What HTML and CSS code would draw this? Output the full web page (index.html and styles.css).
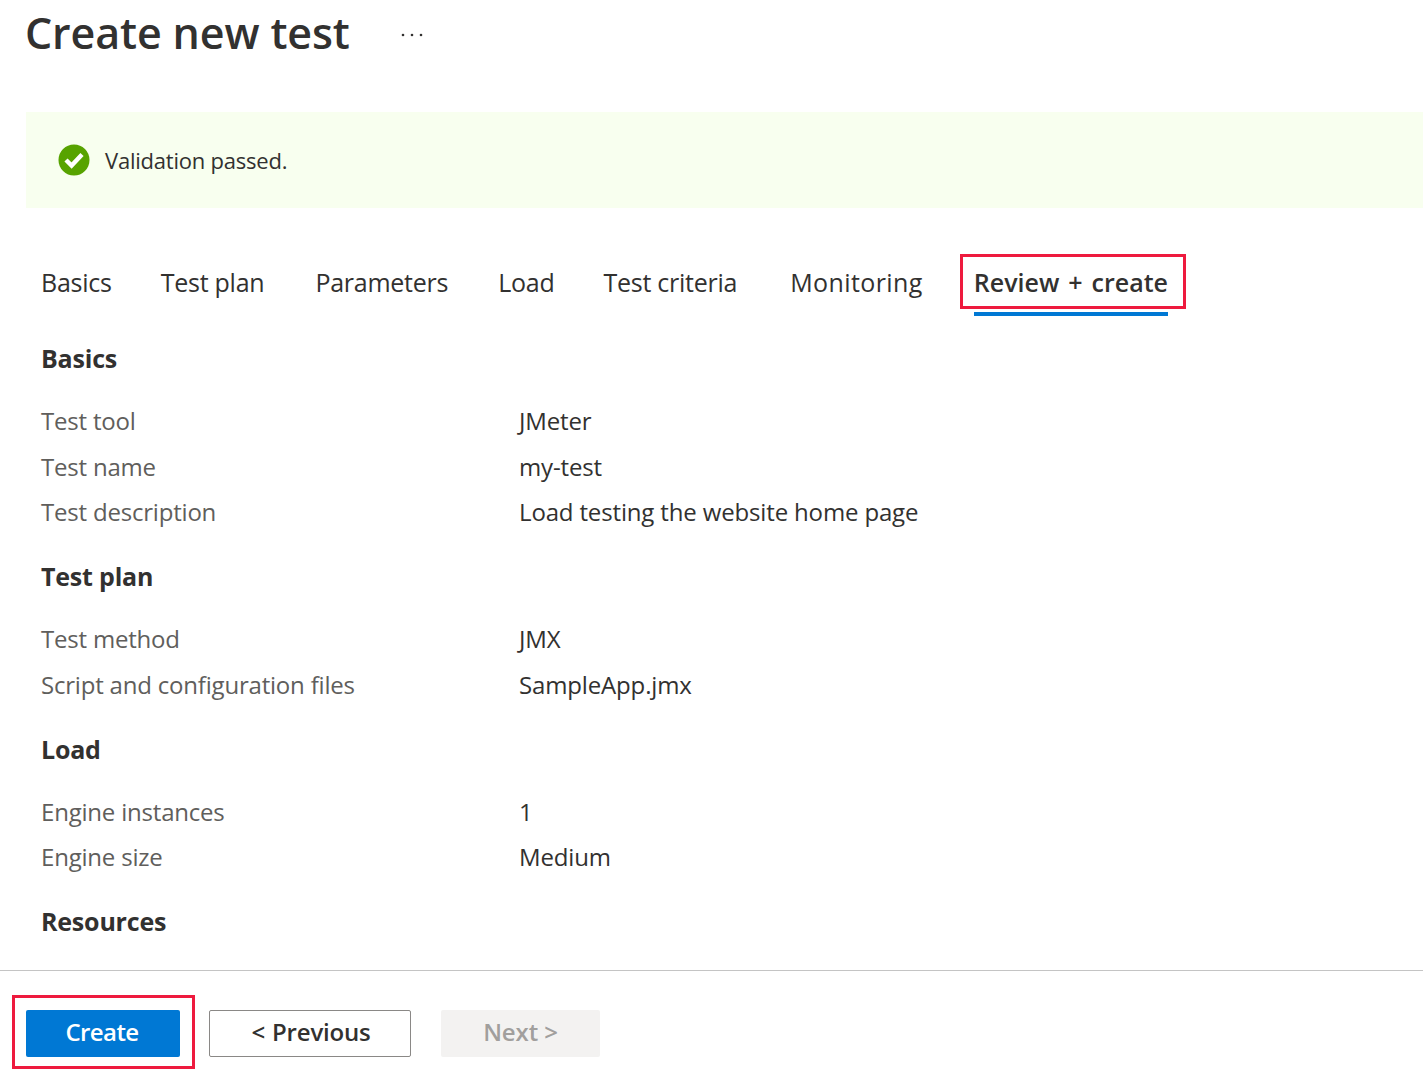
FILE: index.html
```html
<!DOCTYPE html>
<html lang="en">

<head>
    <meta charset="UTF-8">
    <meta name="viewport" content="width=device-width, initial-scale=1.0">
    <title>Create new test</title>
    <link rel="stylesheet" href="styles.css">
</head>

<body>
    <div class="page-head">
        <h1>Create new test</h1>
        <span class="more">
            <svg width="22" height="4" viewBox="0 0 22 4"><circle cx="2" cy="2" r="1.3"/><circle cx="11" cy="2" r="1.3"/><circle cx="20" cy="2" r="1.3"/></svg>
        </span>
    </div>

    <div class="banner">
        <svg class="check" width="32" height="32" viewBox="0 0 32 32">
            <circle cx="16" cy="16" r="15.5" fill="#57a300"/>
            <path d="M8 16l5.6 5.6 10.4-11" fill="none" stroke="#fff" stroke-width="4.4"/>
        </svg>
        <span>Validation passed.</span>
    </div>

    <div class="tabs">
        <span class="tab tab-basics">Basics</span>
        <span class="tab tab-plan">Test plan</span>
        <span class="tab tab-params">Parameters</span>
        <span class="tab tab-load">Load</span>
        <span class="tab tab-criteria">Test criteria</span>
        <span class="tab tab-monitoring">Monitoring</span>
        <span class="tab tab-active">Review + create</span>
    </div>

    <div class="review">
        <h2>Basics</h2>
        <dl>
            <dt>Test tool</dt><dd>JMeter</dd>
            <dt>Test name</dt><dd>my-test</dd>
            <dt>Test description</dt><dd>Load testing the website home page</dd>
        </dl>

        <h2>Test plan</h2>
        <dl>
            <dt>Test method</dt><dd>JMX</dd>
            <dt>Script and configuration files</dt><dd>SampleApp.jmx</dd>
        </dl>

        <h2>Load</h2>
        <dl>
            <dt>Engine instances</dt><dd>1</dd>
            <dt>Engine size</dt><dd>Medium</dd>
        </dl>

        <h2>Resources</h2>
    </div>

    <div class="footer">
        <button type="button" class="btn btn-primary">Create</button>
        <button type="button" class="btn btn-prev">&lt; Previous</button>
        <button type="button" class="btn btn-next">Next &gt;</button>
    </div>
</body>

</html>
```

FILE: styles.css
```css
body {
    margin: 0;
    height: 1084px;
    overflow: hidden;
    background: #fff;
    color: #323130;
    font-family: "Open Sans", "Noto Sans", sans-serif;
    font-size: 24px;
}

.page-head {
    display: flex;
    align-items: center;
    height: 66px;
    padding-left: 25px;
}

h1 {
    margin: 0;
    font-size: 43px;
    font-weight: 600;
    line-height: 66px;
    letter-spacing: -0.13px;
}

.more {
    display: flex;
    margin: 4px 0 0 51px;
    fill: #323130;
}

.banner {
    display: flex;
    align-items: center;
    gap: 15px;
    height: 96px;
    margin: 46px 0 0 26px;
    padding-left: 32px;
    background: #f8ffef;
    font-size: 22px;
    letter-spacing: -0.22px;
}

.tabs {
    display: flex;
    height: 64px;
    margin-top: 43px;
    padding-left: 41px;
    line-height: 62px;
    font-size: 25px;
    letter-spacing: -0.25px;
}

.tab-plan { margin-left: 49px; }
.tab-params { margin-left: 51px; }
.tab-load { margin-left: 50px; }
.tab-criteria { margin-left: 49px; }

.tab-monitoring {
    margin-left: 53px;
    letter-spacing: 0.4px;
}

.tab-active {
    position: relative;
    margin-left: 51px;
    font-weight: 600;
    letter-spacing: 0;
    word-spacing: 2.5px;
}

.tab-active::before {
    content: "";
    position: absolute;
    left: -14px;
    right: -18px;
    top: 3px;
    height: 49px;
    border: 3px solid #ee1a3e;
}

.tab-active::after {
    content: "";
    position: absolute;
    left: 0;
    right: 0;
    top: 61px;
    height: 4px;
    background: #0078d4;
}

.review {
    height: 631px;
    padding: 24px 0 0 41px;
}

h2 {
    margin: 0;
    font-size: 25px;
    font-weight: 700;
    line-height: 38px;
    letter-spacing: -0.2px;
}

dl {
    display: grid;
    grid-template-columns: 478px 1fr;
    grid-auto-rows: 45.5px;
    margin: 21px 0 22.5px;
    font-size: 24px;
    line-height: 45px;
    letter-spacing: -0.15px;
}

dt {
    color: #605e5c;
    letter-spacing: -0.2px;
}

dd {
    margin: 0;
}

.footer {
    display: flex;
    height: 113px;
    padding: 39px 0 0 26px;
    border-top: 1px solid #c4c4c4;
    box-sizing: border-box;
}

.btn {
    box-sizing: border-box;
    height: 47px;
    padding: 0 0 4px;
    border: 1px solid transparent;
    border-radius: 2px;
    font-family: inherit;
    font-size: 24px;
    font-weight: 600;
    letter-spacing: -0.1px;
}

.btn-primary {
    position: relative;
    width: 154px;
    padding-right: 2px;
    background: #0078d4;
    color: #fff;
    letter-spacing: -0.6px;
}

.btn-primary::after {
    content: "";
    position: absolute;
    left: -15px;
    top: -16px;
    width: 177px;
    height: 68px;
    border: 3px solid #ee1a3e;
}

.btn-prev {
    width: 202px;
    margin-left: 29px;
    padding-left: 2px;
    background: #fff;
    border-color: #8a8886;
    color: #323130;
    letter-spacing: -0.2px;
    word-spacing: 1px;
}

.btn-next {
    width: 159px;
    margin-left: 30px;
    background: #f3f2f1;
    color: #a19f9d;
}
```
